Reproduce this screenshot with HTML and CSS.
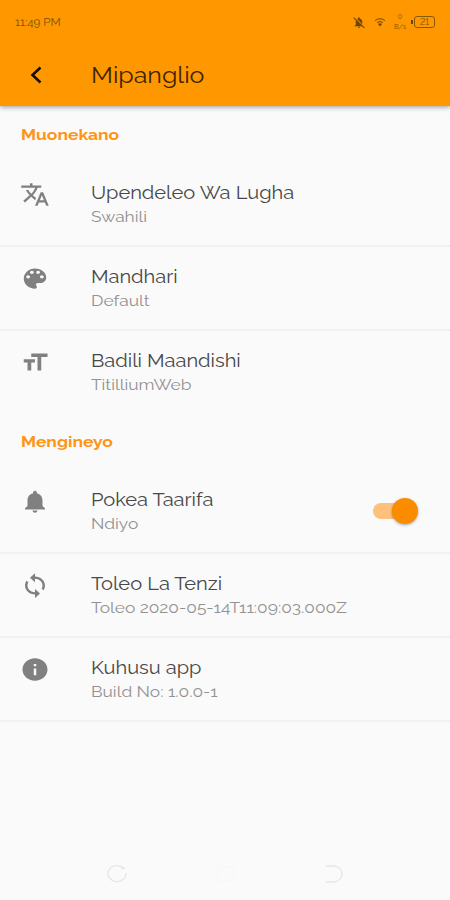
FILE: index.html
```html
<!DOCTYPE html>
<html lang="sw">
<head>
    <meta charset="UTF-8">
    <meta name="viewport" content="width=device-width, initial-scale=1.0">
    <title>Mipanglio</title>
    <link rel="stylesheet" href="styles.css">
</head>
<body>
    <div class="screen">
        <header class="app-header">
            <div class="status-bar">
                <span class="clock">11:49 PM</span>
                <div class="status-icons">
                    <svg class="muted" viewBox="0 0 24 24"><path d="M12 22a2 2 0 0 0 2-2h-4a2 2 0 0 0 2 2zM6 8v8l-2 2v1h14L6 7zM8 5l10 10v-4c0-3-1.500-5.500-4.500-6.300V4a1.500 1.500 0 0 0-3 0v.7z"/><path class="line" d="M2 3l20 19"/></svg>
                    <svg class="wifi" viewBox="0 0 24 20"><path class="line" d="M2 7q10-7 20 0M6 11q6-4 12 0"/><path d="M8 14q4-3 8 0l-4 5z"/></svg>
                    <span class="speed"><span>0</span><span>B/s</span></span>
                    <span class="battery">21</span>
                </div>
            </div>
            <div class="toolbar">
                <svg class="back" viewBox="0 0 12 18"><path d="M10.500 1.500L2.500 9l8 7.500"/></svg>
                <h1 class="page-title">Mipanglio</h1>
            </div>
        </header>

        <main class="settings">
            <h2 class="section-title">Muonekano</h2>
            <div class="row">
                <svg class="icon" viewBox="0 0 24 24" preserveAspectRatio="none"><path d="M12.870 15.070l-2.540-2.510.03-.03c1.740-1.940 2.980-4.170 3.710-6.530H17V4h-7V2H8v2H1v1.990h11.170C11.500 7.920 10.440 9.750 9 11.350 8.070 10.320 7.300 9.190 6.690 8h-2c.73 1.630 1.730 3.170 2.980 4.560l-5.090 5.020L4 19l5-5 3.110 3.110.76-2.040zM18.500 10h-2L12 22h2l1.120-3h4.750L21 22h2l-4.500-12zm-2.620 7l1.620-4.330L19.120 17h-3.240z"/></svg>
                <div class="text"><span class="title">Upendeleo Wa Lugha</span><span class="value">Swahili</span></div>
            </div>
            <div class="row">
                <svg class="icon" viewBox="0 0 24 24" preserveAspectRatio="none"><path d="M12 3c-4.970 0-9 4.030-9 9s4.030 9 9 9c.83 0 1.500-.67 1.500-1.500 0-.39-.15-.74-.39-1.010-.23-.26-.38-.61-.38-.99 0-.83.67-1.500 1.500-1.500H16c2.760 0 5-2.240 5-5 0-4.420-4.030-8-9-8zm-5.500 9c-.83 0-1.500-.67-1.500-1.500S5.670 9 6.500 9 8 9.670 8 10.500 7.330 12 6.500 12zm3-4C8.670 8 8 7.330 8 6.500S8.670 5 9.500 5s1.500.67 1.500 1.500S10.330 8 9.500 8zm5 0c-.83 0-1.500-.67-1.500-1.500S13.670 5 14.500 5s1.500.67 1.500 1.500S15.330 8 14.500 8zm3 4c-.83 0-1.500-.67-1.500-1.500S16.670 9 17.500 9s1.500.67 1.500 1.500-.67 1.500-1.500 1.500z"/></svg>
                <div class="text"><span class="title">Mandhari</span><span class="value">Default</span></div>
            </div>
            <div class="row last">
                <svg class="icon" viewBox="0 0 24 24" preserveAspectRatio="none"><path d="M9 4v3h5v12h3V7h5V4H9zm-6 8h3v7h3v-7h3V9H3v3z"/></svg>
                <div class="text"><span class="title">Badili Maandishi</span><span class="value">TitilliumWeb</span></div>
            </div>

            <h2 class="section-title">Mengineyo</h2>
            <div class="row">
                <svg class="icon" viewBox="0 0 24 24" preserveAspectRatio="none"><path d="M12 22c1.100 0 2-.9 2-2h-4c0 1.100.89 2 2 2zm6-6v-5c0-3.070-1.640-5.640-4.500-6.320V4c0-.83-.67-1.500-1.500-1.500s-1.500.67-1.500 1.500v.68C7.630 5.360 6 7.920 6 11v5l-2 2v1h16v-1l-2-2z"/></svg>
                <div class="text"><span class="title">Pokea Taarifa</span><span class="value">Ndiyo</span></div>
                <div class="switch"><span class="thumb"></span></div>
            </div>
            <div class="row">
                <svg class="icon" viewBox="0 0 24 24" preserveAspectRatio="none"><path d="M12 4V1L8 5l4 4V6c3.310 0 6 2.690 6 6 0 1.010-.25 1.970-.7 2.800l1.460 1.460C19.540 15.030 20 13.570 20 12c0-4.420-3.580-8-8-8zm0 14c-3.310 0-6-2.690-6-6 0-1.010.25-1.970.7-2.800L5.240 7.740C4.460 8.970 4 10.430 4 12c0 4.420 3.580 8 8 8v3l4-4-4-4v3z"/></svg>
                <div class="text"><span class="title">Toleo La Tenzi</span><span class="value">Toleo 2020-05-14T11:09:03.000Z</span></div>
            </div>
            <div class="row">
                <svg class="icon" viewBox="0 0 24 24" preserveAspectRatio="none"><path d="M12 2C6.480 2 2 6.480 2 12s4.480 10 10 10 10-4.480 10-10S17.520 2 12 2zm1 15h-2v-6h2v6zm0-8h-2V7h2v2z"/></svg>
                <div class="text"><span class="title">Kuhusu app</span><span class="value">Build No: 1.0.0-1</span></div>
            </div>
        </main>

        <nav class="nav-bar">
            <svg viewBox="0 0 22 20"><path d="M18 4.500A9 8 0 1 0 20 9M15 4h4"/></svg>
            <svg class="home" viewBox="0 0 22 20"><path d="M3 3h16v14H3z"/></svg>
            <svg viewBox="0 0 22 20"><path d="M3 2h8a8 8 0 0 1 0 16H3"/></svg>
        </nav>
    </div>
</body>
</html>
```
FILE: styles.css
```css
* { box-sizing: border-box; }
body { margin: 0; background: #fafafa; font-family: Raleway, Lato, sans-serif; }
.screen { width: 450px; height: 900px; display: flex; flex-direction: column; background: #fafafa; overflow: hidden; }

.app-header { height: 106px; flex: none; background: #ff9800; box-shadow: 0 1px 5px rgba(0, 0, 0, 0.4); }
.status-bar { height: 44px; padding: 0 15px; display: flex; align-items: center; justify-content: space-between; color: #7d4e04; }
.clock { font-size: 11px; transform: scaleX(1.06); transform-origin: left; }
.status-icons { display: flex; align-items: center; }
.status-icons svg { fill: #6f4504; }
.status-icons .line { fill: none; stroke: #6f4504; stroke-width: 2; }
.muted { width: 14px; height: 13px; margin-right: 8px; }
.wifi { width: 12px; height: 10px; margin-right: 8px; }
.speed { width: 12px; margin-right: 8px; display: flex; flex-direction: column; align-items: center; font-size: 7px; line-height: 10px; }
.battery { width: 21px; height: 12px; border: 1px solid #8b5705; border-radius: 3px; font-size: 9px; line-height: 10px; text-align: center; font-variant-numeric: lining-nums; position: relative; }
.battery::before { content: ""; position: absolute; left: -4px; top: 3px; width: 2px; height: 4px; background: #6f4504; }
.toolbar { height: 62px; padding-left: 30px; display: flex; align-items: center; }
.back { width: 12px; height: 18px; margin-right: 48.5px; fill: none; stroke: #170e00; stroke-width: 2.6; }
.page-title { margin: 0; font-size: 22.5px; font-weight: 400; line-height: 30px; color: #3b2604; transform: scaleX(1.11); transform-origin: left; }

.settings { flex: 1; padding-top: 2px; }
.section-title { width: 300px; height: 55px; margin: 0; padding-left: 21px; font-size: 15.5px; font-weight: 700; line-height: 54px; color: #ff9416; transform: scaleX(1.125); transform-origin: 21px 50%; }
.row { height: 84px; padding: 17px 32px 0 20px; display: flex; align-items: flex-start; border-bottom: 2px solid #f1f1f1; }
.row.last { border-bottom: none; }
.icon { width: 30px; height: 27px; margin: 1px 40.5px 0 0; flex: none; fill: #808080; }
.text { flex: 1; display: flex; flex-direction: column; align-items: flex-start; white-space: nowrap; }
.title, .value { transform-origin: left; }
.title { font-size: 18px; line-height: 26px; color: #484848; transform: scaleX(1.114); }
.value { font-size: 15.5px; line-height: 22px; color: #929292; transform: scaleX(1.12); }

.switch { width: 45px; height: 26px; margin-top: 11px; padding: 5px 0; position: relative; }
.switch::before { content: ""; display: block; width: 38px; height: 16px; border-radius: 8px; background: #fdc17c; }
.thumb { position: absolute; right: 0; top: 0; width: 26px; height: 26px; border-radius: 50%; background: #fb8c00; box-shadow: 0 1px 3px rgba(0, 0, 0, 0.35); }

.nav-bar { height: 52px; padding: 0 105px 0 106px; display: flex; align-items: center; justify-content: space-between; }
.nav-bar svg { width: 22px; height: 20px; fill: none; stroke: #e6e6e6; stroke-width: 1.3; }
.nav-bar .home { stroke: #f7f7f7; }
```
